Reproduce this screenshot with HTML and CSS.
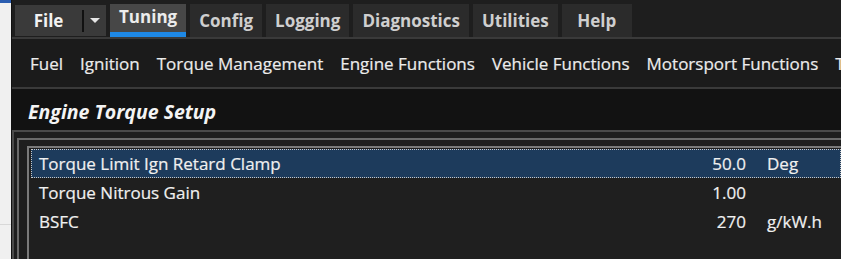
FILE: index.html
```html
<!DOCTYPE html>
<html lang="en">
<head>
    <meta charset="UTF-8">
    <title>Engine Torque Setup</title>
    <link rel="stylesheet" href="styles.css">
</head>
<body>
    <div class="side">
        <div class="side-top"></div>
        <div class="side-line"></div>
    </div>
    <main class="app">
        <nav class="tabs">
            <div class="file-btn">
                <span class="file-label">File</span>
                <span class="file-arrow"></span>
            </div>
            <div class="tab active">Tuning</div>
            <div class="tab">Config</div>
            <div class="tab">Logging</div>
            <div class="tab">Diagnostics</div>
            <div class="tab">Utilities</div>
            <div class="tab">Help</div>
        </nav>
        <div class="submenu">
            <span>Fuel</span>
            <span>Ignition</span>
            <span>Torque Management</span>
            <span>Engine Functions</span>
            <span>Vehicle Functions</span>
            <span>Motorsport Functions</span>
            <span>Traction</span>
        </div>
        <h1 class="title">Engine Torque Setup</h1>
        <section class="frame-outer">
            <div class="frame-mid">
                <div class="list">
                    <div class="row selected">
                        <span class="name">Torque Limit Ign Retard Clamp</span>
                        <span class="value">50.0</span>
                        <span class="unit">Deg</span>
                    </div>
                    <div class="row">
                        <span class="name">Torque Nitrous Gain</span>
                        <span class="value">1.00</span>
                        <span class="unit"></span>
                    </div>
                    <div class="row">
                        <span class="name">BSFC</span>
                        <span class="value">270</span>
                        <span class="unit">g/kW.h</span>
                    </div>
                </div>
            </div>
        </section>
    </main>
</body>
</html>
```

FILE: styles.css
```css
body {
    margin: 0;
    height: 259px;
    overflow: hidden;
    display: flex;
    background-color: #f0f0f0;
    font-family: "Open Sans", "Noto Sans", sans-serif;
}

.side {
    width: 11px;
    flex-shrink: 0;
    background-color: #f0f0f0;
}
.side-top {
    height: 3px;
    background-color: #2a5db0;
}
.side-line {
    margin-top: 221px;
    height: 1px;
    background-color: #d8d8d8;
}

.app {
    flex: 1;
    min-width: 0;
    background-color: #1c1c1c;
    border-left: 1px solid #111;
    overflow: hidden;
    display: flex;
    flex-direction: column;
}

/* top tab bar */
.tabs {
    display: flex;
    gap: 4px;
    height: 33px;
    padding: 4px 0 0 3px;
    background-color: #1e1e1e;
    border-bottom: 2px solid #3a3a3a;
    font-weight: bold;
    font-size: 17px;
    color: #cfcfcf;
}
.file-btn {
    display: flex;
    align-items: center;
    width: 91px;
    height: 31px;
    margin-top: 1px;
    background-color: #3a3a3a;
    color: #f2f2f2;
}
.file-label {
    width: 67px;
    text-align: center;
    border-right: 2px solid #111;
    line-height: 22px;
}
.file-arrow {
    margin-left: 6px;
    width: 0;
    height: 0;
    border-left: 5px solid transparent;
    border-right: 5px solid transparent;
    border-top: 5px solid #e6e6e6;
}
.tab {
    display: flex;
    align-items: center;
    justify-content: center;
    padding: 0 9px;
    min-width: 70px;
    height: 33px;
    background-color: #2b2b2b;
    box-sizing: border-box;
}
.tab.active {
    background-color: #474747;
    color: #ececec;
    border-bottom: 5px solid #1e88e5;
    padding-bottom: 3px;
}

/* second row menu */
.submenu {
    display: flex;
    gap: 17px;
    align-items: center;
    height: 48px;
    padding-left: 18px;
    background-color: #1b1b1b;
    border-bottom: 2px solid #3a3a3a;
    font-size: 17px;
    color: #ececec;
    -webkit-text-stroke: 0.2px #ececec;
    white-space: nowrap;
}

.title {
    margin: 0;
    height: 41px;
    line-height: 37px;
    padding-top: 4px;
    padding-left: 16px;
    box-sizing: border-box;
    background-color: #121212;
    font-size: 19.5px;
    font-style: italic;
    font-weight: bold;
    color: #f4f4f4;
}

/* nested frames */
.frame-outer {
    flex: 1;
    padding: 6px 0 0 3px;
    background-color: #1e1e1e;
    border-top: 2px solid #4a4a4a;
    border-left: 2px solid #4a4a4a;
}
.frame-mid {
    height: 100%;
    padding: 6px 0 0 8px;
    border-top: 2px solid #6a6a6a;
    border-left: 2px solid #6a6a6a;
    box-sizing: border-box;
}
.list {
    height: 100%;
    padding: 1px 0 0 2px;
    border-top: 2px solid #7a7a7a;
    border-left: 2px solid #7a7a7a;
    background-color: #1f1f1f;
    box-sizing: border-box;
    font-size: 17px;
    color: #f0f0f0;
    -webkit-text-stroke: 0.2px #f0f0f0;
}
.row {
    display: flex;
    align-items: center;
    height: 29px;
    padding-left: 7px;
    border: 1px dotted transparent;
    box-sizing: border-box;
}
.row.selected {
    background-color: #1d3b5c;
    border: 1px dotted #c8c8c8;
}
.name {
    width: 651px;
}
.value {
    width: 56px;
    text-align: right;
}
.unit {
    margin-left: 21px;
}
```
